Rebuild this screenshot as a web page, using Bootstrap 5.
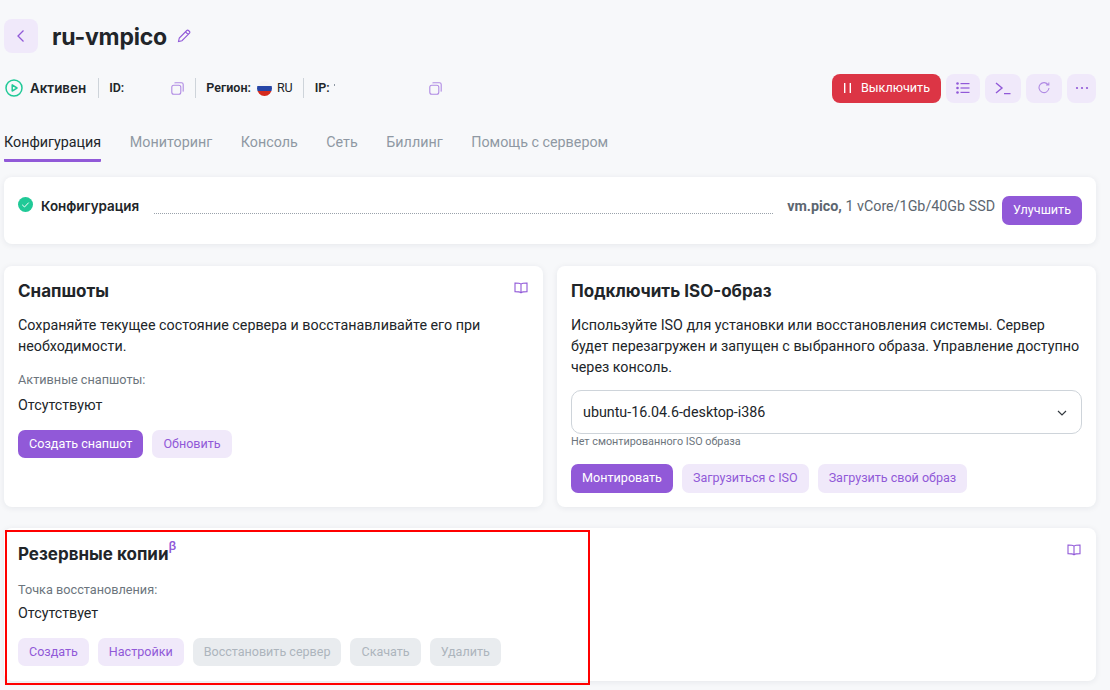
<!DOCTYPE html>
<html lang="ru">
<head>
    <meta charset="UTF-8">
    <meta name="viewport" content="width=device-width, initial-scale=1.0">
    <title>ru-vmpico</title>
    <link href="https://cdn.jsdelivr.net/npm/bootstrap@5.3.0/dist/css/bootstrap.min.css" rel="stylesheet">
    <style>
        html, body { height: 690px; overflow: hidden; }
        body { background: #f7f8fa; font-family: Roboto, "Liberation Sans", sans-serif; font-size: 14px; color: #212529; position: relative; }
        .page-wrap { padding: 19px 14px 0 4px; }
        .back-btn { width: 34px; height: 34px; border-radius: 8px; background: #f0e9fa; }
        .srv-title { font-family: Inter, sans-serif; font-weight: 700; font-size: 23px; line-height: 32px; padding-top: 2px; margin: 0 0 0 14px; letter-spacing: -.2px; }
        .status-row { height: 30px; margin-top: 20px; font-size: 12.5px; padding-left: 1px; }
        .status-row b { font-weight: 600; }
        .status-text { font-family: Inter, sans-serif; font-weight: 600; font-size: 13.4px; }
        .vsep { width: 1px; height: 20px; background: #ced4da; }
        .flag { width: 15px; height: 15px; border-radius: 50%; background: linear-gradient(#f4f4f4 0 33%, #2746a6 33% 66%, #d52b1e 66%); }
        .act-btn { height: 29px; border-radius: 8px; background: #f0e9fa; border: 0; padding: 0; color: #9159d8; }
        .off-btn { width: 109px; height: 29px; border: 0; border-radius: 8px; background: #dc3545; color: #fff; font-size: 12.6px; }
        .tab-line { margin-top: 29px; gap: 28.6px; height: 30px; }
        .tab-item { color: #8f98a3; font-size: 14.3px; line-height: 21px; text-decoration: none; padding-top: 4px; margin-top: -4px; }
        .tab-item.on { color: #212529; border-bottom: 3px solid #9159d8; border-radius: 1px; height: 34px; }
        .panel { background: #fff; border: 0; border-radius: 8px; box-shadow: 0 1px 6px rgba(30, 40, 60, .08); padding: 13px 14px 14px; }
        .cfg-panel { margin-top: 15px; height: 67px; padding-top: 19px; }
        .cfg-title { font-family: Inter, sans-serif; font-weight: 600; font-size: 13.4px; line-height: 20px; margin-left: 8px; }
        .dots { flex: 1; border-bottom: 1px dotted #9aa2ab; height: 18px; margin: 0 14px 0 15px; }
        .cfg-spec { color: #5c6670; font-size: 14.3px; margin-right: 7px; }
        .pur-btn { height: 29px; padding: 0 11px; border: 0; border-radius: 7px; background: #9159d8; color: #fff; font-size: 12.6px; }
        .soft-btn { height: 28px; padding: 0 11px; border: 0; border-radius: 7px; background: #f0e9fa; color: #9159d8; font-size: 12.55px; }
        .dis-btn { height: 28px; padding: 0 11px; border: 0; border-radius: 7px; background: #e9ecef; color: #adb5bd; font-size: 12.55px; }
        .two-cols { display: grid; grid-template-columns: 539px 539px; gap: 14px; margin-top: 22px; }
        .tall-panel { height: 241px; position: relative; }
        .panel-h { font-family: Inter, sans-serif; font-weight: 700; font-size: 17px; line-height: 24px; margin: 0 0 12px; }
        .panel-txt { line-height: 21px; font-size: 14.3px; margin: 0; }
        .lbl { color: #6c757d; font-size: 12.7px; line-height: 18px; }
        .val { font-size: 14.3px; line-height: 21px; }
        .book { position: absolute; right: 15px; top: 16px; }
        .iso-select { height: 44px; border: 1px solid #ced4da; border-radius: 10px; padding: 1px 14px 0 11px; margin-top: 12px; font-size: 14.3px; }
        .iso-hint { font-size: 10.8px; color: #6c757d; line-height: 14px; margin-top: 1px; }
        .backup-panel { margin-top: 21px; height: 153px; position: relative; padding-top: 14px; }
        .beta { color: #9159d8; font-size: 13px; font-weight: 500; vertical-align: 4px; line-height: 0; font-family: Roboto, sans-serif; }
        .ip-tick { width: 1px; height: 2px; background: #8f98a3; margin: 0 0 7px 4px; }
        .red-frame { position: absolute; left: 5px; top: 530px; width: 585px; height: 155px; border: 2px solid #f00; pointer-events: none; }
    </style>
</head>
<body>
    <div class="page-wrap">

        <!-- Заголовок -->
        <div class="d-flex align-items-center">
            <div class="back-btn d-flex align-items-center justify-content-center">
                <svg width="12" height="14" viewBox="0 0 12 14" fill="none" stroke="#9159d8" stroke-width="1.3"><path d="M8.5 1.5 3 7l5.5 5.5"/></svg>
            </div>
            <h1 class="srv-title">ru-vmpico</h1>
            <svg style="margin-left:10px" width="14" height="14" viewBox="0 0 14 14" fill="none" stroke="#9159d8" stroke-width="1.1"><path d="M1.500 12.500 2.300 9 9.800 1.500a1.200 1.200 0 0 1 1.700 0l1 1a1.200 1.200 0 0 1 0 1.700L5 11.700l-3.500.8ZM8.500 2.800l2.700 2.700"/></svg>
        </div>

        <!-- Статус -->
        <div class="status-row d-flex align-items-center">
            <svg width="18" height="18" viewBox="0 0 18 18" fill="none" stroke="#20c997" stroke-width="1.5"><circle cx="9" cy="9" r="8"/><path d="M7.200 5.900v6.200L12 9Z" stroke-linejoin="round"/></svg>
            <span class="status-text" style="margin-left:7px">Активен</span>
            <span class="vsep" style="margin-left:12px"></span>
            <b style="margin-left:10px">ID:</b>
            <svg style="margin-left:47px" width="13" height="13" viewBox="0 0 13 13" fill="none" stroke="#b08ae3" stroke-width="1.1"><rect x=".8" y="3.200" width="9" height="9" rx="2"/><path d="M3.500 1.200c.2-.2.5-.4 1-.4h6c1 0 1.700.7 1.700 1.700v6c0 .5-.2.8-.4 1"/></svg>
            <span class="vsep" style="margin-left:11px"></span>
            <b style="margin-left:10px;margin-right:6px">Регион:</b>
            <span class="flag"></span>
            <span style="margin-left:5px">RU</span>
            <span class="vsep" style="margin-left:10px"></span>
            <b style="margin-left:11px">IP:</b>
            <span class="ip-tick"></span>
            <svg style="margin-left:94px" width="13" height="13" viewBox="0 0 13 13" fill="none" stroke="#b08ae3" stroke-width="1.1"><rect x=".8" y="3.200" width="9" height="9" rx="2"/><path d="M3.500 1.200c.2-.2.5-.4 1-.4h6c1 0 1.700.7 1.700 1.700v6c0 .5-.2.8-.4 1"/></svg>

            <div class="ms-auto d-flex align-items-center" style="gap:5px">
                <button class="off-btn d-flex align-items-center justify-content-center" style="gap:9px">
                    <svg width="9" height="12" viewBox="0 0 9 12" fill="#fff"><rect x="1" y="1" width="1.400" height="10"/><rect x="6.600" y="1" width="1.400" height="10"/></svg>
                    Выключить
                </button>
                <button class="act-btn d-flex align-items-center justify-content-center" style="width:34px">
                    <svg width="14" height="12" viewBox="0 0 14 12" fill="#9159d8"><circle cx="1.500" cy="1.500" r="1.300"/><circle cx="1.500" cy="6" r="1.300"/><circle cx="1.500" cy="10.500" r="1.300"/><rect x="4.500" y="1" width="9" height="1.200"/><rect x="4.500" y="5.400" width="9" height="1.200"/><rect x="4.500" y="9.800" width="9" height="1.200"/></svg>
                </button>
                <button class="act-btn d-flex align-items-center justify-content-center" style="width:36px">
                    <svg width="16" height="13" viewBox="0 0 16 13" fill="none" stroke="#9159d8" stroke-width="1.400"><path d="M1 1l6 5-6 5M9 11.600h6.500"/></svg>
                </button>
                <button class="act-btn d-flex align-items-center justify-content-center" style="width:36px">
                    <svg width="12" height="12" viewBox="0 0 12 12" fill="none" stroke="#b08ae3" stroke-width="1.100"><path d="M10.300 3A5 5 0 1 0 11 6M8 3h2.800V.6"/></svg>
                </button>
                <button class="act-btn d-flex align-items-center justify-content-center" style="width:29px">
                    <svg width="14" height="4" viewBox="0 0 14 4" fill="#9159d8"><circle cx="2" cy="2" r="1.100"/><circle cx="7" cy="2" r="1.100"/><circle cx="12" cy="2" r="1.100"/></svg>
                </button>
            </div>
        </div>

        <!-- Вкладки -->
        <div class="tab-line d-flex">
            <a class="tab-item on" href="#">Конфигурация</a>
            <a class="tab-item" href="#">Мониторинг</a>
            <a class="tab-item" href="#">Консоль</a>
            <a class="tab-item" href="#">Сеть</a>
            <a class="tab-item" href="#">Биллинг</a>
            <a class="tab-item" href="#">Помощь с сервером</a>
        </div>

        <!-- Конфигурация -->
        <div class="panel cfg-panel d-flex align-items-start">
            <svg width="15" height="15" viewBox="0 0 15 15" style="margin-top:1px"><circle cx="7.500" cy="7.500" r="7.500" fill="#20c997"/><path d="M4.200 7.800l2.300 2.200 4.200-4.400" fill="none" stroke="#fff" stroke-width="1"/></svg>
            <span class="cfg-title">Конфигурация</span>
            <span class="dots"></span>
            <span class="cfg-spec"><b>vm.pico,</b> 1 vCore/1Gb/40Gb SSD</span>
            <button class="pur-btn">Улучшить</button>
        </div>

        <div class="two-cols">
            <!-- Снапшоты -->
            <div class="panel tall-panel">
                <h2 class="panel-h">Снапшоты</h2>
                <svg class="book" width="14" height="12" viewBox="0 0 14 12" fill="none" stroke="#9159d8" stroke-width="1.100"><path d="M7 2.200C6 1.200 4.500 1 1 1v8.600c3.500 0 5 .3 6 1.200 1-.9 2.500-1.200 6-1.200V1C9.500 1 8 1.200 7 2.200Zm0 0v8.600"/></svg>
                <p class="panel-txt">Сохраняйте текущее состояние сервера и восстанавливайте его при необходимости.</p>
                <div class="lbl" style="margin-top:14px">Активные снапшоты:</div>
                <div class="val" style="margin-top:6px">Отсутствуют</div>
                <div class="d-flex" style="gap:9px;margin-top:14px">
                    <button class="pur-btn" style="height:28px">Создать снапшот</button>
                    <button class="soft-btn">Обновить</button>
                </div>
            </div>

            <!-- ISO -->
            <div class="panel tall-panel">
                <h2 class="panel-h">Подключить ISO-образ</h2>
                <p class="panel-txt">Используйте ISO для установки или восстановления системы. Сервер будет перезагружен и запущен с выбранного образа. Управление доступно через консоль.</p>
                <div class="iso-select d-flex align-items-center justify-content-between">
                    <span>ubuntu-16.04.6-desktop-i386</span>
                    <svg width="10" height="6" viewBox="0 0 10 6" fill="none" stroke="#343a40" stroke-width="1.200"><path d="M1 1l4 4 4-4"/></svg>
                </div>
                <div class="iso-hint">Нет смонтированного ISO образа</div>
                <div class="d-flex" style="gap:9px;margin-top:15px">
                    <button class="pur-btn" style="width:102px;padding:0">Монтировать</button>
                    <button class="soft-btn" style="height:29px">Загрузиться с ISO</button>
                    <button class="soft-btn" style="height:29px">Загрузить свой образ</button>
                </div>
            </div>
        </div>

        <!-- Резервные копии -->
        <div class="panel backup-panel">
            <h2 class="panel-h" style="margin-bottom:15px">Резервные копии<sup class="beta">β</sup></h2>
            <svg class="book" width="14" height="12" viewBox="0 0 14 12" fill="none" stroke="#9159d8" stroke-width="1.100"><path d="M7 2.200C6 1.200 4.500 1 1 1v8.600c3.500 0 5 .3 6 1.200 1-.9 2.500-1.200 6-1.200V1C9.500 1 8 1.200 7 2.200Zm0 0v8.600"/></svg>
            <div class="lbl">Точка восстановления:</div>
            <div class="val" style="margin-top:4px">Отсутствует</div>
            <div class="d-flex" style="gap:9px;margin-top:14px">
                <button class="soft-btn">Создать</button>
                <button class="soft-btn">Настройки</button>
                <button class="dis-btn">Восстановить сервер</button>
                <button class="dis-btn">Скачать</button>
                <button class="dis-btn">Удалить</button>
            </div>
        </div>
    </div>

    <div class="red-frame"></div>

    <script src="https://cdn.jsdelivr.net/npm/bootstrap@5.3.0/dist/js/bootstrap.bundle.min.js"></script>
</body>
</html>
